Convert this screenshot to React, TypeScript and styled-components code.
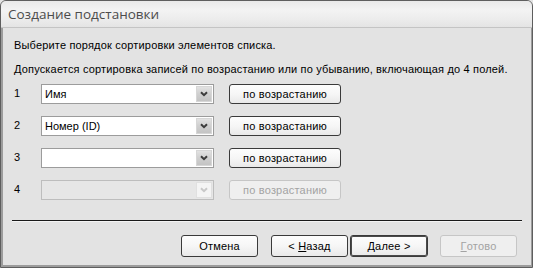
import { Fragment } from 'react';
import styled, { createGlobalStyle } from 'styled-components';

const GlobalStyle = createGlobalStyle`
  html, body {
    margin: 0;
    padding: 0;
    background: #e3e3e3;
  }
`;

const Window = styled.div`
  box-sizing: border-box;
  width: 533px;
  height: 268px;
  display: flex;
  flex-direction: column;
  background: #e3e3e3;
  border: 1px solid #5e5e5e;
  border-top-left-radius: 6px;
  border-top-right-radius: 6px;
  box-shadow: inset 2px 0 0 #9c9c9c, inset -1px -2px 0 #9c9c9c;
  overflow: hidden;
  font-family: "Liberation Sans", Arial, sans-serif;
`;

const TitleBar = styled.div`
  height: 26px;
  display: flex;
  align-items: center;
  padding-left: 7px;
  background: linear-gradient(#e9e9e9, #f3f3f3 35%, #ececec 70%, #e4e4e4);
  border-bottom: 1px solid #c4c4c4;
  font-family: "Open Sans", "Liberation Sans", sans-serif;
  font-size: 13.5px;
  color: #4c4c4c;
`;

const Body = styled.div`
  flex: 1;
  display: flex;
  flex-direction: column;
  padding: 10px 10px 0 11px;
`;

const Line = styled.div<{ $gap?: number }>`
  padding-left: 2px;
  margin-top: ${p => p.$gap ?? 0}px;
  font-size: 11px;
  line-height: 14px;
  letter-spacing: 0.17px;
  color: #000;
  white-space: nowrap;
`;

const SortGrid = styled.div`
  display: grid;
  grid-template-columns: 27px 188px 112px;
  row-gap: 12px;
  margin-top: 8px;
  padding-left: 2px;
`;

const Num = styled.div`
  font-size: 11px;
  line-height: 18px;
  color: #000;
`;

const Combo = styled.div<{ $off?: boolean }>`
  box-sizing: border-box;
  width: 173px;
  height: 20px;
  display: flex;
  align-items: center;
  padding: 0 1px 0 3px;
  background: ${p => (p.$off ? '#e6e6e6' : '#fff')};
  border: 1px solid ${p => (p.$off ? '#bdbdbd' : '#9c9c9c')};
  font-size: 11px;
  color: #000;
`;

const ComboText = styled.span`
  flex: 1;
`;

const DropButton = styled.span<{ $off?: boolean }>`
  box-sizing: border-box;
  width: 16px;
  height: 16px;
  display: flex;
  align-items: center;
  justify-content: center;
  background: ${p =>
    p.$off ? '#f4f4f4' : 'linear-gradient(#e2e2e2, #cfcfcf 50%, #c4c4c4)'};
  border: 1px solid ${p => (p.$off ? '#e0e0e0' : '#d6d6d6')};
`;

const Btn = styled.div<{ $off?: boolean; $default?: boolean; $w?: number }>`
  box-sizing: border-box;
  width: ${p => p.$w ?? 112}px;
  height: ${p => (p.$w ? 22 : 20)}px;
  display: flex;
  align-items: center;
  justify-content: center;
  white-space: pre;
  border-radius: 3px;
  border: 1px solid ${p => (p.$off ? '#c6c6c6' : '#3a3a3a')};
  box-shadow: ${p => (p.$default ? 'inset 0 0 0 1px #4a4a4a' : 'none')};
  background: ${p =>
    p.$off ? '#efefef' : 'linear-gradient(#fdfdfd, #f6f6f6 50%, #e9e9e9)'};
  font-size: 11px;
  letter-spacing: 0.2px;
  color: ${p => (p.$off ? '#a3a3a3' : '#000')};
`;

const Divider = styled.div`
  margin-top: 20px;
  height: 1px;
  background: #1a1a1a;
  box-shadow: 0 1px 0 #f4f4f4;
`;

const Footer = styled.div`
  display: flex;
  justify-content: flex-end;
  margin-top: 14px;
  padding-right: 5px;
`;

const Gap = styled.div<{ $w: number }>`
  width: ${p => p.$w}px;
`;

function Chevron({ off }: { off?: boolean }) {
  return (
    <svg width="8" height="6" viewBox="0 0 8 6">
      <path
        d="M1 1.2 L4 4.2 L7 1.2"
        fill="none"
        stroke={off ? '#c8c8c8' : '#3c3c3c'}
        strokeWidth="2"
      />
    </svg>
  );
}

const rows = [
  { n: '1', value: 'Имя' },
  { n: '2', value: 'Номер (ID)' },
  { n: '3', value: '' },
  { n: '4', value: '', off: true },
];

function App() {
  return (
    <>
      <GlobalStyle />
      <Window>
        <TitleBar>Создание подстановки</TitleBar>
        <Body>
          <Line>Выберите порядок сортировки элементов списка.</Line>
          <Line $gap={10}>
            Допускается сортировка записей по возрастанию или по убыванию, включающая до 4 полей.
          </Line>
          <SortGrid>
            {rows.map(r => (
              <Fragment key={r.n}>
                <Num>{r.n}</Num>
                <Combo $off={r.off}>
                  <ComboText>{r.value}</ComboText>
                  <DropButton $off={r.off}>
                    <Chevron off={r.off} />
                  </DropButton>
                </Combo>
                <Btn $off={r.off}>по возрастанию</Btn>
              </Fragment>
            ))}
          </SortGrid>
          <Divider />
          <Footer>
            <Btn $w={77}>Отмена</Btn>
            <Gap $w={13} />
            <Btn $w={77}>{'< '}<u>Н</u>азад</Btn>
            <Gap $w={2} />
            <Btn $w={78} $default><u>Д</u>{'алее >'}</Btn>
            <Gap $w={12} />
            <Btn $w={77} $off><u>Г</u>отово</Btn>
          </Footer>
        </Body>
      </Window>
    </>
  );
}

export default App;
